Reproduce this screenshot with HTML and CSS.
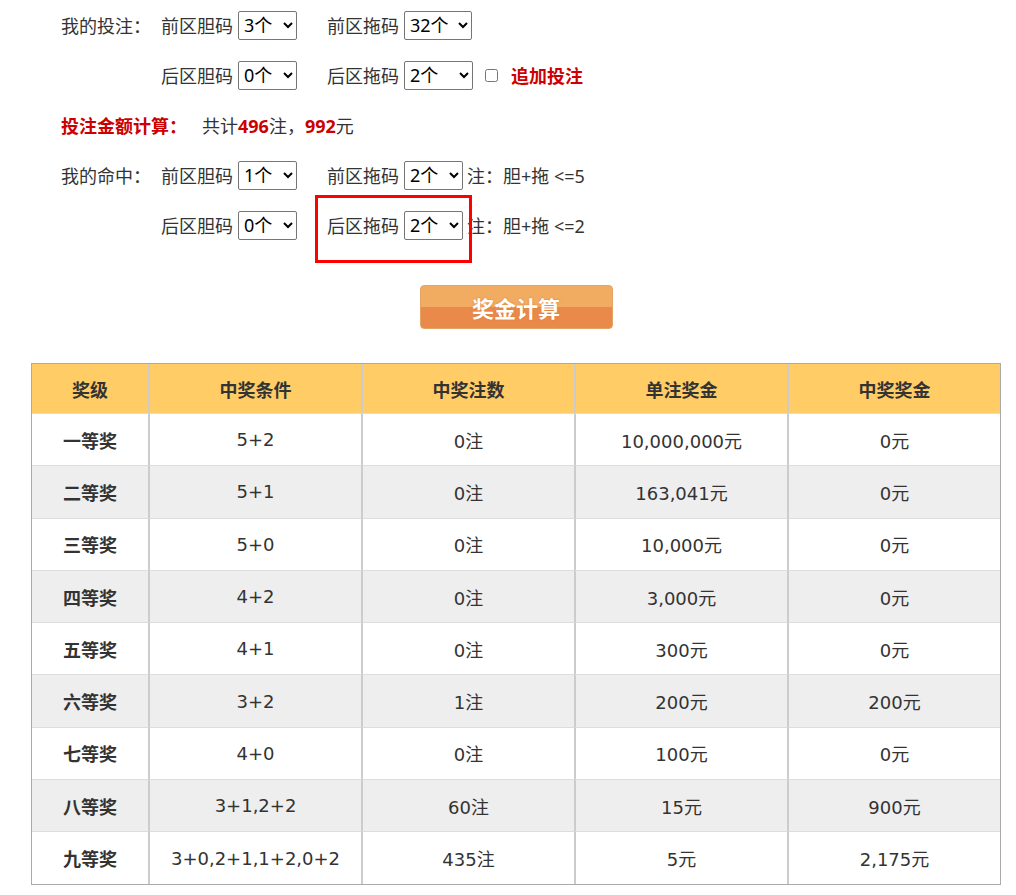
FILE: index.html
```html
<!DOCTYPE html>
<html lang="zh-CN">
<head>
    <meta charset="UTF-8">
    <title>大乐透胆拖奖金计算</title>
    <link rel="stylesheet" href="styles.css">
</head>
<body>

<div class="page">

    <div class="form">
        <div class="row">
            <span class="label">我的投注：</span>
            <label class="field">
                <span>前区胆码</span>
                <select class="sel">
                    <option>0个</option><option>1个</option><option>2个</option>
                    <option selected>3个</option><option>4个</option>
                </select>
            </label>
            <label class="field">
                <span>前区拖码</span>
                <select class="sel wide">
                    <option>2个</option><option>10个</option><option>20个</option>
                    <option selected>32个</option><option>35个</option>
                </select>
            </label>
        </div>

        <div class="row">
            <span class="label"></span>
            <label class="field">
                <span>后区胆码</span>
                <select class="sel">
                    <option selected>0个</option><option>1个</option>
                </select>
            </label>
            <label class="field">
                <span>后区拖码</span>
                <select class="sel wider">
                    <option selected>2个</option><option>3个</option><option>12个</option>
                </select>
            </label>
            <input type="checkbox" class="check">
            <span class="red">追加投注</span>
        </div>

        <div class="row">
            <span class="label red long">投注金额计算：</span>
            <span>共计<b class="red">496</b>注，<b class="red">992</b>元</span>
        </div>

        <div class="row">
            <span class="label">我的命中：</span>
            <label class="field">
                <span>前区胆码</span>
                <select class="sel">
                    <option>0个</option><option selected>1个</option><option>2个</option><option>3个</option>
                </select>
            </label>
            <label class="field">
                <span>前区拖码</span>
                <select class="sel">
                    <option>0个</option><option>1个</option><option selected>2个</option>
                    <option>3个</option><option>4个</option><option>5个</option>
                </select>
            </label>
            <span class="note">注：胆+拖 &lt;=5</span>
        </div>

        <div class="row">
            <span class="label"></span>
            <label class="field">
                <span>后区胆码</span>
                <select class="sel">
                    <option selected>0个</option><option>1个</option>
                </select>
            </label>
            <label class="field marked">
                <span>后区拖码</span>
                <select class="sel">
                    <option>0个</option><option>1个</option><option selected>2个</option>
                </select>
            </label>
            <span class="note">注：胆+拖 &lt;=2</span>
        </div>
    </div>

    <div class="actions">
        <button class="calc">奖金计算</button>
    </div>

    <table class="prize">
        <thead>
            <tr>
                <th class="c1">奖级</th>
                <th>中奖条件</th>
                <th>中奖注数</th>
                <th>单注奖金</th>
                <th>中奖奖金</th>
            </tr>
        </thead>
        <tbody>
            <tr><td class="c1">一等奖</td><td>5+2</td><td>0注</td><td>10,000,000元</td><td>0元</td></tr>
            <tr><td class="c1">二等奖</td><td>5+1</td><td>0注</td><td>163,041元</td><td>0元</td></tr>
            <tr><td class="c1">三等奖</td><td>5+0</td><td>0注</td><td>10,000元</td><td>0元</td></tr>
            <tr><td class="c1">四等奖</td><td>4+2</td><td>0注</td><td>3,000元</td><td>0元</td></tr>
            <tr><td class="c1">五等奖</td><td>4+1</td><td>0注</td><td>300元</td><td>0元</td></tr>
            <tr><td class="c1">六等奖</td><td>3+2</td><td>1注</td><td>200元</td><td>200元</td></tr>
            <tr><td class="c1">七等奖</td><td>4+0</td><td>0注</td><td>100元</td><td>0元</td></tr>
            <tr><td class="c1">八等奖</td><td>3+1,2+2</td><td>60注</td><td>15元</td><td>900元</td></tr>
            <tr><td class="c1">九等奖</td><td>3+0,2+1,1+2,0+2</td><td>435注</td><td>5元</td><td>2,175元</td></tr>
        </tbody>
    </table>

</div>

</body>
</html>
```

FILE: styles.css
```css
* {
    box-sizing: border-box;
}

body {
    margin: 0;
    background: #fff;
    color: #333;
    font-family: "Noto Sans", "Noto Sans CJK SC", sans-serif;
    font-size: 18px;
}

.page {
    width: 1001px;
    padding-left: 31px;
}

.red {
    color: #c00;
    font-weight: bold;
}

/* form rows */
.form {
    padding-left: 30px;
}

.row {
    display: flex;
    align-items: center;
    height: 50px;
    white-space: nowrap;
}

.label {
    width: 100px;
    flex: none;
}
.label.long {
    width: 141px;
}

.field {
    display: flex;
    align-items: center;
    gap: 5px;
    margin-right: 30px;
}
.field:last-of-type {
    margin-right: 0;
}

.sel {
    width: 59px;
    height: 29px;
    padding: 0 1px;
    font: inherit;
    color: #000;
    border: 1px solid #767676;
    border-radius: 2px;
    background: #fff;
}
.sel.wide { width: 68px; }
.sel.wider { width: 69px; }

.check {
    width: 13px;
    height: 13px;
    margin: 0 13px 0 12px;
}

.note {
    margin-left: 4px;
}

.marked {
    position: relative;
}
.marked::after {
    content: '';
    position: absolute;
    left: -12px; right: -9px;
    top: -16px; bottom: -23px;
    border: 3px solid #f00;
    pointer-events: none;
}

/* button */
.actions {
    display: flex;
    justify-content: center;
    padding: 35px 0 34px;
}

.calc {
    width: 193px;
    height: 44px;
    border: 1px solid #e3a362;
    border-radius: 4px;
    background: linear-gradient(#f1ac62 0, #f1ac62 50%, #e98a4a 50%, #e98a4a 100%);
    color: #fff;
    font-family: "Noto Sans CJK SC", sans-serif;
    font-size: 22px;
    font-weight: bold;
    text-shadow: 0 0 2px #d77a3a;
    cursor: pointer;
}

/* prize table */
.prize {
    width: 970px;
    border-collapse: separate;
    border-spacing: 0;
    border: 1px solid #aaa;
    table-layout: fixed;
    text-align: center;

    th, td {
        border-left: 2px solid #ccc;
        padding: 0;
    }
    th:first-child, td:first-child {
        border-left: 0;
    }

    th {
        height: 49px;
        background: #fc6;
        font-weight: bold;
    }
    td {
        height: 52.3px;
        border-top: 1px solid #ddd;
        font-family: "DejaVu Sans", "Noto Sans CJK SC", sans-serif;
    }
    tbody tr:nth-child(even) td {
        background: #eee;
    }

    .c1 {
        width: 116px;
        font-weight: bold;
        font-family: "Noto Sans CJK SC", sans-serif;
    }
}
```
